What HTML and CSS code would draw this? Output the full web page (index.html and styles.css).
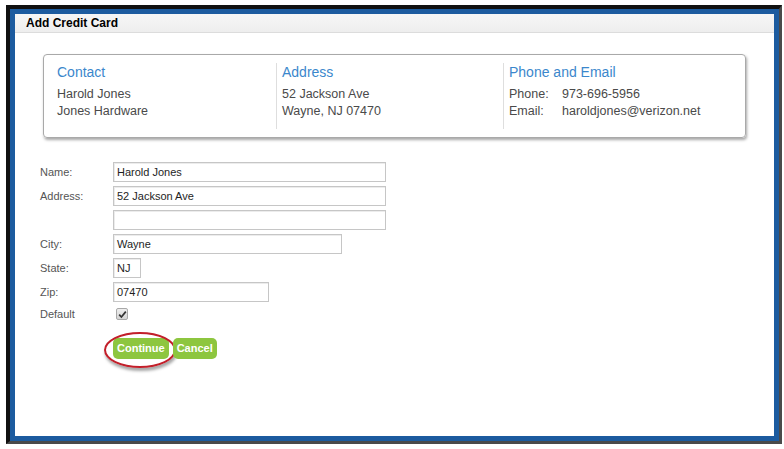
FILE: index.html
```html
<!DOCTYPE html>
<html>
<head>
<meta charset="utf-8">
<link rel="stylesheet" href="styles.css">
</head>
<body>
<div class="frame">
  <div class="dialog">
    <div class="titlebar">Add Credit Card</div>
    <div class="body">
      <div class="card">
        <div class="col first">
          <div class="heading">Contact</div>
          <div class="line">Harold Jones</div>
          <div class="line">Jones Hardware</div>
        </div>
        <div class="col">
          <div class="heading">Address</div>
          <div class="line">52 Jackson Ave</div>
          <div class="line">Wayne, NJ 07470</div>
        </div>
        <div class="col">
          <div class="heading">Phone and Email</div>
          <div class="line"><span class="k">Phone:</span>973-696-5956</div>
          <div class="line"><span class="k">Email:</span>haroldjones@verizon.net</div>
        </div>
      </div>

      <div class="form">
        <div class="lbl">Name:</div>
        <div class="field w-name">Harold Jones</div>
        <div class="lbl">Address:</div>
        <div class="field w-name">52 Jackson Ave</div>
        <div class="lbl"></div>
        <div class="field w-name"></div>
        <div class="lbl">City:</div>
        <div class="field w-city">Wayne</div>
        <div class="lbl">State:</div>
        <div class="field w-state">NJ</div>
        <div class="lbl">Zip:</div>
        <div class="field w-zip">07470</div>
        <div class="lbl short">Default</div>
        <div class="short"><span class="check"><svg width="9" height="9" viewBox="0 0 9 9"><path d="M1.2 4.6 L3.4 7 L7.8 1.6" fill="none" stroke="#333" stroke-width="1.7"/></svg></span></div>
      </div>

      <div class="buttons">
        <span class="btn primary">Continue<span class="ring"></span></span>
        <span class="btn">Cancel</span>
      </div>
    </div>
  </div>
</div>
</body>
</html>
```
FILE: styles.css
```css
html, body {
  margin: 0;
  padding: 0;
  background: #ffffff;
  font-family: "Liberation Sans", Arial, sans-serif;
}
.frame {
  margin: 5px 0 0 6px;
  width: 776px;
  height: 439px;
  box-sizing: border-box;
  border-left: 4px solid #111;
  border-top: 4px solid #111;
  border-right: 3px solid #4a4a4a;
  border-bottom: 3px solid #4a4a4a;
  background: #1c5b9f;
  padding: 5px;
}
.dialog {
  background: #ffffff;
  height: 100%;
  box-sizing: border-box;
}
.titlebar {
  height: 18px;
  line-height: 18px;
  background: linear-gradient(#f6f6f6, #eeeeee);
  border-bottom: 1px solid #dcdcdc;
  font-weight: bold;
  font-size: 12px;
  color: #000;
  padding-left: 11px;
}
.body {
  padding: 21px 28px 0 28px;
}
.card {
  display: flex;
  border: 1px solid #a9a9a9;
  border-radius: 4px;
  box-shadow: 1px 2px 3px rgba(0,0,0,0.35);
  padding: 8px 0 8px 5px;
  height: 66px;
}
.col {
  width: 227px;
  box-sizing: border-box;
  border-left: 1px solid #dedede;
  padding: 0 0 9px 5px;
}
.col.first {
  border-left-color: transparent;
  padding-left: 7px;
}
.heading {
  font-size: 14px;
  line-height: 18px;
  color: #3b87cc;
  margin-bottom: 5px;
}
.line {
  font-size: 12.5px;
  line-height: 17px;
  color: #4a4a4a;
  white-space: nowrap;
}
.k {
  display: inline-block;
  width: 53px;
}
.form {
  margin: 24px 0 0 -3px;
  display: grid;
  grid-template-columns: 73px 1fr;
  grid-auto-rows: 20px;
  row-gap: 4px;
  align-items: center;
}
.lbl {
  font-size: 11px;
  color: #555;
}
.short {
  align-self: start;
  height: 16px;
  display: flex;
  align-items: center;
}
.field {
  height: 20px;
  box-sizing: border-box;
  border: 1px solid #c6c6c6;
  box-shadow: inset 1px 1px 0 #ececec;
  font-size: 11px;
  line-height: 18px;
  padding-left: 3px;
  color: #1e1e1e;
  background: #fff;
}
.w-name { width: 273px; }
.w-city { width: 229px; }
.w-state { width: 28px; }
.w-zip { width: 156px; }
.check {
  display: inline-flex;
  align-items: center;
  justify-content: center;
  width: 10px;
  height: 10px;
  margin-left: 3px;
  border: 1px solid #a8a8a8;
  border-radius: 2px;
  background: linear-gradient(#eeeeee, #d4d4d4);
}
.buttons {
  display: flex;
  gap: 4px;
  margin: 12px 0 0 70px;
}
.btn {
  position: relative;
  display: inline-block;
  height: 21px;
  line-height: 21px;
  padding: 0 4px;
  border-radius: 5px;
  background: #8dc63f;
  color: #fff;
  font-weight: bold;
  font-size: 11px;
}
.ring {
  position: absolute;
  left: -9px;
  top: -6px;
  width: 68px;
  height: 32px;
  border: 2px solid #c21f2a;
  border-radius: 50%;
  box-shadow: 1px 3px 3px rgba(0,0,0,0.35);
}
```
